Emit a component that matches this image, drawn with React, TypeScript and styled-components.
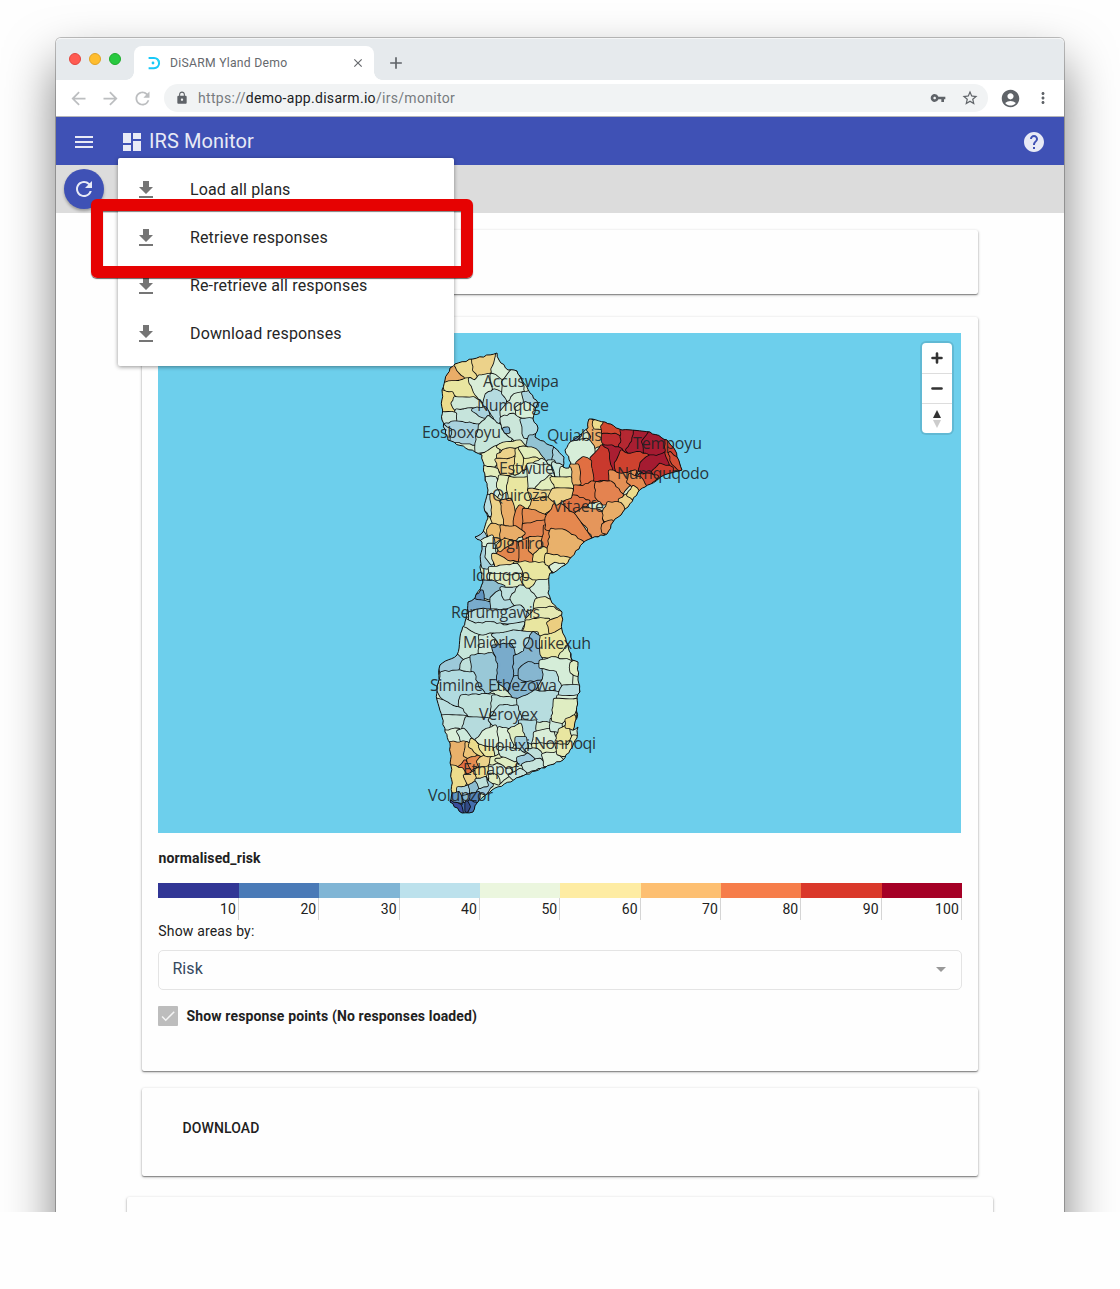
import React from 'react';
import styled, { createGlobalStyle } from 'styled-components';
import {
  MdAccountCircle, MdAdd, MdArrowBack, MdArrowForward, MdCheck, MdClose, MdDashboard, MdGetApp,
  MdHelp, MdLock, MdMenu, MdMoreVert, MdRefresh, MdStarBorder, MdVpnKey,
} from 'react-icons/md';

const GlobalStyle = createGlobalStyle`
  * { box-sizing: border-box; }
  body { margin: 0; background: #fefefe; font-family: Roboto, sans-serif; color: #212121; }
  svg { display: block; flex: none; }
`;

const Stage = styled.div`
  height: 1212px;
  overflow: hidden;
  padding: 38px 56px 0;
`;
const Window = styled.div`
  height: 1300px;
  border-radius: 5px 5px 0 0;
  background: #fefefe;
  box-shadow: 0 0 0 1px rgba(0, 0, 0, 0.24), 0 25px 50px rgba(0, 0, 0, 0.5);
`;
const TabStrip = styled.div`
  height: 42px;
  background: #e6eaed;
  border-radius: 5px 5px 0 0;
  border-top: 1px solid #f5f6f7;
  display: flex;
  align-items: flex-end;
`;
const Lights = styled.div`
  display: flex;
  gap: 8px;
  padding: 0 13px 15px;
  width: 78px;
`;
const Light = styled.i<{ $fill: string; $edge: string }>`
  width: 12px;
  height: 12px;
  border-radius: 50%;
  background: ${(p) => p.$fill};
  border: 1px solid ${(p) => p.$edge};
`;
const Tab = styled.div`
  position: relative;
  width: 240px;
  height: 34px;
  padding: 0 9px 0 12px;
  display: flex;
  align-items: center;
  background: #fff;
  border-radius: 8px 8px 0 0;
  color: #66696d;
  font-size: 12.2px;
  letter-spacing: 0.26px;
  &::before, &::after {
    content: '';
    position: absolute;
    bottom: 0;
    width: 8px;
    height: 8px;
  }
  &::before { left: -8px; background: radial-gradient(circle at 0 0, transparent 7.5px, #fff 8px); }
  &::after { right: -8px; background: radial-gradient(circle at 100% 0, transparent 7.5px, #fff 8px); }
  svg:last-child { margin-left: auto; }
`;
const TabTitle = styled.span` margin-left: 8px; `;
const NewTab = styled.div`
  color: #5f6368;
  padding: 0 0 7px 12px;
`;
const Toolbar = styled.div`
  height: 37px;
  display: flex;
  align-items: center;
  padding-left: 12px;
  gap: 11px;
  background: #fff;
  border-bottom: 1px solid #b5b5b8;
  color: #bcbec0;
`;
const Omnibox = styled.div`
  width: 824px;
  height: 28px;
  padding: 0 9px 0 11px;
  border-radius: 14px;
  background: #f1f3f4;
  color: #5f6368;
  display: flex;
  align-items: center;
`;
const Url = styled.span`
  flex: 1;
  margin-left: 9px;
  font-size: 14px;
  letter-spacing: 0.3px;
  color: #777b7f;
  b { font-weight: 400; color: #202124; }
`;
const StarSlot = styled.span` margin-left: 15px; `;
const Account = styled.div`
  display: flex;
  align-items: center;
  gap: 13px;
  margin-left: 0.5px;
  color: #5f6368;
`;
const AppBar = styled.header`
  height: 48px;
  background: #3f51b5;
  color: #e8eaf6;
  display: flex;
  align-items: center;
  padding: 2px 18px 0 16px;
`;
const Title = styled.h1`
  flex: 1;
  margin: 0 0 2px 5px;
  font-size: 20px;
  line-height: 24px;
  font-weight: 400;
  letter-spacing: 0.08px;
`;
const TitleIcon = styled.span` margin-left: 24px; `;
const ActionBar = styled.div`
  position: relative;
  height: 48px;
  background: #dcdcdc;
  padding: 4px 8px;
`;
const RefreshButton = styled.div`
  width: 40px;
  height: 40px;
  border-radius: 50%;
  background: #3f51b5;
  color: #e8eaf6;
  display: grid;
  place-items: center;
  box-shadow: 0 2px 3px rgba(0, 0, 0, 0.3);
`;
const Menu = styled.ul`
  position: absolute;
  z-index: 2;
  left: 62px;
  top: -7px;
  width: 336px;
  height: 208px;
  margin: 0;
  padding: 8px 0;
  list-style: none;
  background: #fff;
  border-radius: 2px;
  box-shadow: 0 1px 4px rgba(0, 0, 0, 0.42);
`;
const MenuItem = styled.li`
  height: 48px;
  padding: 0 16px;
  display: flex;
  align-items: center;
  gap: 32px;
  font-size: 16px;
  letter-spacing: 0.14px;
  color: #262626;
  svg { color: #757575; }
`;
const MenuText = styled.span` padding-bottom: 1px; `;
const Highlight = styled.div`
  position: absolute;
  z-index: 3;
  left: 35px;
  top: 34px;
  width: 382px;
  height: 79px;
  border: 12px solid #e60202;
  border-radius: 6px;
  box-shadow: 0 1px 1px rgba(0, 0, 0, 0.6), inset 0 1px 1px rgba(0, 0, 0, 0.5);
`;
const Content = styled.main`
  display: flex;
  flex-direction: column;
  padding: 17px 71px 0;
`;
const Card = styled.section<{ $height: number; $gap: number; $wide?: boolean }>`
  height: ${(p) => p.$height}px;
  margin: 0 ${(p) => (p.$wide ? 0 : 15)}px ${(p) => p.$gap}px;
  padding: 16px;
  border-radius: 2px;
  background: #fefefe;
  box-shadow: 0 1px 1px rgba(0, 0, 0, 0.32), 0 1px 3px rgba(0, 0, 0, 0.32);
`;
const MapFrame = styled.div`
  position: relative;
  width: 803px;
  height: 500px;
  background: #6dcfec;
`;
const ZoomControls = styled.div`
  position: absolute;
  right: 9px;
  top: 10px;
  width: 30px;
  height: 90px;
  border-radius: 4px;
  background: #fff;
  box-shadow: 0 0 0 2px rgba(0, 0, 0, 0.1);
`;
const ZoomButton = styled.div`
  height: 30px;
  display: grid;
  place-items: center;
  & + & { border-top: 1px solid #ddd; }
`;
const LegendTitle = styled.div`
  margin-top: 17px;
  padding-left: 0.5px;
  height: 33px;
  font-size: 14px;
  line-height: 17px;
  font-weight: 700;
  letter-spacing: 0.13px;
`;
const Legend = styled.div`
  display: grid;
  grid-template-columns: 81px repeat(9, 1fr);
`;
const LegendStep = styled.div<{ $color: string }>`
  height: 37px;
  border-top: 15px solid ${(p) => p.$color};
  font-size: 14px;
  line-height: 22px;
  letter-spacing: 0.1px;
  text-align: right;
  padding-right: 3px;
  box-shadow: inset -1px 0 #d5d5d5;
`;
const FieldLabel = styled.div`
  height: 30px;
  line-height: 22px;
  padding-left: 0.3px;
  font-size: 14px;
  letter-spacing: 0.17px;
`;
const Select = styled.div`
  height: 40px;
  padding: 0 15px 3px 13.4px;
  border: 1px solid #e4e4e4;
  border-radius: 5px;
  display: flex;
  align-items: center;
  justify-content: space-between;
  font-size: 16px;
  letter-spacing: 0.1px;
  color: #35495e;
`;
const Caret = styled.i`
  margin-top: 1px;
  border: 5px solid transparent;
  border-top-color: #999;
  border-bottom: 0;
`;
const CheckRow = styled.div`
  margin-top: 16px;
  display: flex;
  align-items: center;
  gap: 8.5px;
  font-size: 14px;
  font-weight: 700;
  letter-spacing: 0.14px;
`;
const CheckBox = styled.span`
  width: 20px;
  height: 20px;
  display: grid;
  place-items: center;
  background: #bdbdbd;
  border-radius: 1px;
  color: #f5f5f5;
`;
const DownloadButton = styled.div`
  padding: 14px 24.5px;
  font-size: 14px;
  line-height: 20px;
  font-weight: 500;
  letter-spacing: 0.1px;
`;

type Area = [fill: string, points: string];

/* Country outline in map pixels. */
const outline =
  '455,364 473,359 497,353 499,360 508,370 517,371 522,380 530,393 538,403 535,412 533,419 538,428 535,437 555,448 564,457 563,467 569,468 571,463 565,450 570,442 580,435 588,428 589,419 605,422 622,430 650,432 667,440 675,450 682,470 667,474 645,487 638,492 628,507 613,522 607,534 592,538 583,543 565,565 553,573 550,573 548,593 552,603 562,612 562,630 568,645 572,660 578,662 578,680 580,692 577,697 577,718 573,730 578,727 577,738 570,750 563,760 520,777 492,790 477,803 473,812 462,813 450,802 452,793 450,743 445,732 442,717 437,700 437,690 440,665 457,655 462,630 465,622 468,602 475,598 483,582 480,567 482,542 475,537 483,532 488,518 484,507 488,490 485,477 482,455 475,452 448,440 442,420 442,390 445,380 450,368';

/* Districts, traced at three times map scale from each sheet's origin. */
const sheets: { x: number; y: number; areas: Area[] }[] = [
  {
    x: 420, y: 340,
    areas: [
      ['#e9ad68', '105,72 120,95 145,120 75,132 70,130 90,90'],
      ['#ecdc93', '105,72 160,57 165,90 178,110 165,125 140,115 120,95'],
      ['#ecd28a', '160,57 232,40 222,80 210,100 178,110 163,90'],
      ['#d9eed8', '232,40 245,65 265,85 285,90 280,125 250,125 215,105 222,80'],
      ['#e9e6a0', '75,132 150,118 160,150 175,180 105,175 95,160 78,150'],
      ['#ecdc8c', '68,155 95,160 105,175 100,190 112,215 65,220'],
      ['#d9eed8', '165,125 178,110 215,105 222,150 200,165 185,185 165,155 150,118'],
      ['#d3ebd8', '215,105 250,125 250,165 222,152'],
      ['#cfe8d8', '105,175 160,175 195,200 205,215 165,210 110,210 98,190'],
      ['#b5dbe0', '200,165 222,152 250,165 258,200 235,245 200,215 193,195'],
      ['#c6e4dc', '110,212 165,210 205,220 215,235 180,255 105,245'],
      ['#a9d2dd', '160,210 195,205 205,230 180,225'],
      ['#cce7da', '65,220 105,222 105,250 70,258'],
      ['#a9d2dd', '70,258 105,248 180,257 170,310 85,300'],
      ['#b5dbe0', '70,258 90,270 85,300 65,270'],
      ['#c6e6da', '180,257 205,232 245,265 275,290 260,310 215,335 170,335 170,310'],
      ['#cfeadb', '250,125 280,90 300,120 310,160 285,165 265,180 250,160'],
      ['#d3ebd8', '285,165 310,160 315,200 285,230 250,235 245,215 258,200'],
      ['#a9d2dd', '310,160 330,155 352,190 340,205 315,190'],
      ['#d8efd8', '290,205 315,190 340,205 352,215 340,238 295,238'],
      ['#cbe6da', '245,235 280,225 305,240 315,290 320,320 290,305 250,265'],
      ['#b1dbe0', '305,240 340,240 352,265 345,290 315,290'],
      ['#7eb2d0', '253,267 263,266 265,275 257,275'],
      ['#92c3d3', '330,290 350,285 405,325 415,345 400,365 370,360 320,325'],
      ['#a5d0dc', '405,325 432,350 428,385 415,410 400,365'],
      ['#c6e6da', '385,365 400,365 415,410 400,405'],
      ['#e2edbc', '185,345 235,320 230,360 205,410 190,380'],
      ['#e5e7ac', '235,320 260,310 300,305 320,325 290,330 250,330'],
      ['#ecd28a', '235,345 260,330 290,330 290,350 260,362 235,360'],
      ['#ecd28a', '230,360 260,362 290,350 285,400 245,400'],
      ['#e9e6a0', '290,330 300,325 315,350 312,385 285,400 290,350'],
      ['#e9e6a0', '315,350 345,345 365,360 340,375 312,385'],
      ['#e2edbc', '320,325 345,330 370,360 345,345 315,350 300,325'],
      ['#d9eed8', '340,375 365,360 385,380 395,410 340,400'],
      ['#d9eed8', '425,385 450,385 450,415 425,415'],
    ],
  },
  {
    x: 420, y: 470,
    areas: [
      ['#e2edbc', '190,-10 230,0 240,20 205,25'],
      ['#cde9dc', '200,25 225,25 240,55 228,80 205,70'],
      ['#e2edbc', '240,20 270,25 265,60 245,70 235,50'],
      ['#e9e6a0', '270,25 325,25 328,60 340,90 330,115 305,115 275,125 270,85 265,60'],
      ['#d9eed8', '325,-15 390,-10 400,30 360,45 328,60'],
      ['#e2edbc', '390,20 430,50 385,65 350,55 360,45'],
      ['#e9e6a0', '425,20 450,20 453,55 430,50'],
      ['#c9e7db', '400,-20 425,-10 430,50 410,20'],
      ['#ecd28a', '328,60 385,65 455,60 445,75 400,85 340,90'],
      ['#ebbe70', '340,90 400,85 395,110 370,130 330,115'],
      ['#b9dde0', '195,80 215,80 217,110 210,135 193,110'],
      ['#ecd28a', '215,75 245,95 250,130 260,170 215,165 220,110'],
      ['#e9ad68', '245,95 270,90 280,125 290,155 285,172 260,170 250,130'],
      ['#e48b50', '290,130 300,110 312,120 312,200 295,180 285,165'],
      ['#e48b50', '312,120 345,125 385,140 375,160 312,165'],
      ['#e38450', '312,165 375,155 385,175 370,200 365,240 330,240 312,200'],
      ['#e5edb8', '188,145 205,145 217,180 200,195 190,170'],
      ['#ebbe70', '215,165 245,170 245,205 215,215 205,180'],
      ['#e9ad68', '245,170 285,172 310,190 270,215 245,205'],
      ['#9fccdc', '167,195 185,185 195,200 190,215 170,210'],
      ['#d9eed8', '185,215 215,200 220,225 200,240'],
      ['#a5d0dc', '178,230 205,240 205,275 220,290 190,290 178,255'],
      ['#cde9dc', '205,225 220,225 225,255 215,280 200,260'],
      ['#e3864d', '240,240 275,215 300,220 300,275 260,275 235,260'],
      ['#ebbe70', '235,225 255,210 275,215 240,240'],
      ['#e48b50', '300,220 330,205 330,240 345,265 335,285 300,275'],
      ['#e9ad68', '330,205 365,205 365,240 345,255 330,240'],
      ['#e3864d', '375,170 395,170 400,205 390,235 370,225'],
      ['#ecd28a', '220,255 240,262 260,275 290,280 230,295'],
      ['#ecdc8c', '345,255 365,235 380,240 380,275 345,280'],
      ['#ecdc93', '385,255 445,270 430,290 390,280'],
      ['#e9b16b', '395,175 455,185 490,215 450,265 390,250'],
      ['#e9e6a0', '285,280 345,280 390,285 390,330 345,335 330,325 300,310'],
      ['#d9eed8', '210,295 250,290 290,285 305,315 265,320 215,315'],
      ['#deedc4', '215,315 265,320 300,315 320,340 290,355 250,350 215,335'],
      ['#e9e6a0', '305,325 345,335 352,355 325,360'],
      ['#cfeadb', '352,335 390,330 385,385 350,390 330,365'],
      ['#8dbdd0', '190,335 215,335 250,350 245,360 215,385 185,375'],
      ['#6094bf', '165,385 185,365 188,395 170,395'],
      ['#79abcc', '145,405 150,390 215,400 220,425 190,420 150,435'],
      ['#b1dbe0', '215,385 240,365 275,395 300,430 220,425'],
      ['#bfe0de', '245,355 290,355 280,380 255,385'],
      ['#c6e6da', '275,385 300,350 325,360 350,390 340,415 300,420'],
      ['#e5e9b3', '345,420 350,390 375,385 400,400 425,430 390,430'],
      ['#d9eed8', '390,290 430,280 435,290 405,308'],
    ],
  },
  {
    x: 540, y: 400,
    areas: [
      ['#a51b31', '285,100 380,122 385,200 320,215 260,165'],
      ['#e9ad68', '147,57 163,65 165,82 190,85 192,110 180,135 152,145 158,110 145,90'],
      ['#ecdc8c', '163,65 195,65 190,85 165,82'],
      ['#d7eed9', '75,150 90,125 140,120 158,140 160,160 145,185 92,192 85,170'],
      ['#7599c3', '88,105 105,93 120,105 110,115 95,118'],
      ['#d0482f', '195,65 245,92 242,115 225,110 190,100 187,80'],
      ['#be2e30', '190,105 225,105 245,120 240,150 215,140 190,125'],
      ['#b52832', '245,92 285,92 280,125 262,155 240,145 248,120'],
      ['#a81e32', '285,92 330,97 310,125 315,155 275,160 262,150 280,125'],
      ['#a51b31', '310,125 330,97 380,122 385,160 350,175 315,155'],
      ['#aa1e32', '190,140 215,140 243,150 230,185 228,210 212,215 200,180'],
      ['#c9392d', '155,175 185,140 200,150 205,185 212,215 205,245 155,245 150,205'],
      ['#ce422f', '228,190 245,155 262,165 300,160 325,170 305,190 285,225 235,225'],
      ['#a51b31', '305,190 330,170 350,172 385,155 380,200 330,225 300,210'],
      ['#ce422f', '380,122 405,150 425,210 395,205 380,160'],
      ['#d34e34', '390,160 408,175 425,210 400,190'],
      ['#ca3a2e', '340,215 360,195 395,205 390,222 355,235'],
      ['#d34e34', '300,225 330,225 350,230 320,258 295,235'],
      ['#e49055', '210,215 245,225 285,215 270,250 245,280 215,260'],
      ['#e48b50', '270,225 300,235 315,260 290,270 265,245'],
      ['#e16f42', '112,190 130,175 150,185 155,245 130,262 118,250'],
      ['#e9ad68', '90,197 112,197 118,250 95,262'],
      ['#df7645', '95,262 130,262 155,248 205,248 170,265 175,300 145,305 100,290'],
      ['#e48350', '170,250 212,248 245,285 240,310 190,310 170,290'],
      ['#ecd28a', '240,300 265,285 275,310 250,330'],
      ['#ecdc8c', '265,285 280,262 293,275 280,295'],
      ['#e9ad68', '190,340 205,310 240,312 250,330 215,368 195,360'],
      ['#df7645', '75,300 100,290 145,305 130,325 105,345 80,330'],
      ['#e5965b', '105,345 130,325 180,335 190,400 160,410 140,375'],
      ['#e5884f', '20,355 50,310 80,330 105,350 150,415 130,430 75,395 20,385'],
      ['#e5965b', '190,375 215,365 205,400 190,395'],
      ['#e9b16b', '35,390 75,395 130,430 90,478 25,465'],
      ['#ecdc93', '20,465 90,478 70,500 20,490'],
      ['#d9eed8', '33,500 45,492 70,495 45,515'],
      ['#dfedc2', '65,205 88,205 90,235 65,230'],
      ['#e9e6a0', '35,235 90,235 95,270 55,270'],
      ['#ecd28a', '40,270 95,270 90,290 50,310 30,290'],
    ],
  },
  {
    x: 420, y: 590,
    areas: [
      ['#b9dedf', '150,70 190,60 240,65 300,50 325,80 310,100 250,95 200,100 150,90'],
      ['#bfe1db', '135,90 165,105 210,100 260,110 310,100 300,125 240,135 205,130 155,140 130,115'],
      ['#c6e6da', '128,115 180,140 180,195 145,210 110,195'],
      ['#cde9dc', '180,140 220,135 220,175 235,195 180,193'],
      ['#e5e9b3', '345,60 400,55 430,75 395,100 350,90 320,90'],
      ['#e9e6a0', '312,125 320,95 350,90 385,90 390,150 355,145 350,125'],
      ['#ecce80', '385,100 425,80 425,120 395,135'],
      ['#e9e6a0', '355,145 395,135 425,120 445,165 420,200 360,198'],
      ['#dfedc2', '420,200 442,170 452,215 445,235'],
      ['#b7dddf', '220,135 280,125 350,130 345,180 300,195 270,190'],
      ['#9cc9d9', '62,225 108,195 130,215 120,245 65,250'],
      ['#bfe1db', '130,215 155,205 155,240 120,245'],
      ['#99c8d7', '155,200 215,193 240,225 230,295 190,310 170,285 158,240'],
      ['#79abcb', '220,170 270,165 285,200 285,305 265,300 235,270 238,220'],
      ['#86b6d0', '285,200 315,185 340,130 355,140 355,195 370,215 350,230 320,220 300,240 300,265 285,260'],
      ['#b7dddf', '362,230 410,238 430,285 420,310 360,300'],
      ['#86b6d0', '285,262 330,270 360,268 340,305 290,330 270,305'],
      ['#86b6d0', '300,240 325,220 362,230 362,265 320,270 300,262'],
      ['#d5edd8', '362,215 395,205 450,215 455,290 430,290 412,240 362,230'],
      ['#dfedc2', '455,220 475,210 475,255 455,245'],
      ['#b1dbe0', '65,250 120,245 158,250 170,290 190,310 135,315 115,340 130,375 100,370 55,300'],
      ['#bfe1db', '125,320 220,315 215,390 140,382 120,345'],
      ['#bfe1db', '220,320 290,330 300,390 215,390'],
      ['#b7dddf', '295,330 345,305 420,310 400,390 300,390'],
      ['#b7dddf', '430,290 475,290 475,320 420,315'],
      ['#d9eed8', '415,320 470,320 470,385 430,380 410,355'],
      ['#e9e6a0', '430,370 465,370 460,390 430,390'],
    ],
  },
  {
    x: 420, y: 700,
    areas: [
      ['#b9dedf', '52,0 125,30 140,55 65,50'],
      ['#c6e4dc', '65,50 140,52 130,90 85,95 65,90'],
      ['#b5dbdd', '140,55 210,60 200,90 165,120 130,90'],
      ['#b7dddf', '210,60 240,20 290,20 300,60 280,95 235,85'],
      ['#b1dbe0', '300,65 345,65 340,130 310,120'],
      ['#d9eed8', '75,95 115,90 125,120 145,130 90,128'],
      ['#cde9dc', '115,95 130,90 155,120 150,135 125,120'],
      ['#d9eed8', '170,120 200,90 225,80 240,130 210,145 185,135'],
      ['#d9eed8', '238,85 268,92 285,120 270,145 240,135'],
      ['#dfedc2', '268,92 300,75 310,115 285,130'],
      ['#e9b16b', '90,130 140,130 130,165 145,195 92,200'],
      ['#ecc378', '140,130 150,135 190,165 175,185 135,165'],
      ['#e06e40', '118,203 135,185 152,205 143,222'],
      ['#e58c50', '145,180 175,170 190,185 155,205'],
      ['#ecdc8c', '155,120 180,140 200,165 190,172 150,138'],
      ['#e9e6a0', '180,138 215,145 220,170 200,168'],
      ['#ecdc8c', '95,200 125,208 145,235 130,260 95,285'],
      ['#ecd28a', '135,228 170,215 175,245 150,258'],
      ['#ecd28a', '175,185 190,172 215,175 210,200 185,205'],
      ['#e2edbc', '215,175 240,165 250,190 230,200 210,200'],
      ['#ecdc8c', '170,210 210,200 225,220 200,235 175,235'],
      ['#d9eed8', '210,200 260,195 275,220 240,245 205,230'],
      ['#dfedc2', '230,180 285,170 285,195 260,200'],
      ['#dfedc2', '210,225 230,230 235,250 210,245'],
      ['#9fcddb', '290,115 315,115 320,150 295,150'],
      ['#cde9dc', '240,145 295,150 315,165 285,180 245,165'],
      ['#9fccdc', '295,175 345,160 355,180 325,195 300,190'],
      ['#d9eed8', '345,100 395,90 410,125 380,145 340,130'],
      ['#dfedc2', '340,135 400,135 405,160 350,160'],
      ['#bfe1db', '320,150 350,150 375,175 355,180'],
      ['#c6e4dc', '310,195 360,180 375,195 315,215'],
      ['#d9eed8', '370,165 410,160 425,180 375,195'],
      ['#cde9dc', '395,60 420,55 425,90 395,90'],
      ['#dfedc2', '405,0 470,0 460,40 425,65 400,60'],
      ['#e9e6a0', '420,90 440,80 450,110 440,140 410,125'],
      ['#ecdc8c', '440,60 462,50 458,85 440,80'],
      ['#e5e9b3', '410,135 445,140 460,110 475,115 440,165 415,160'],
      ['#c6e4dc', '270,225 300,210 315,220 280,235'],
      ['#a9d2dd', '115,265 145,260 155,285 120,295'],
      ['#86b6d0', '120,295 150,285 165,300 135,312'],
      ['#8dbdd0', '150,258 175,240 195,260 175,280 155,285'],
      ['#9fccdc', '195,240 215,255 195,280 175,275'],
      ['#bfe1db', '170,240 195,235 200,255 180,260'],
      ['#5384b8', '155,285 175,280 170,312 150,305'],
      ['#6094bf', '90,285 115,280 125,305 95,305'],
      ['#456fae', '120,318 150,305 170,312 155,335 125,340'],
      ['#394d9b', '90,305 120,318 125,340 105,325'],
      ['#334b86', '140,308 146,320 140,332'],
    ],
  },
];

/* Breaks long edges into short uneven ones, as surveyed borders have. */
const roughen = (points: string, size: number) => {
  const pts = points.split(' ').map((p) => p.split(',').map(Number));
  return pts
    .flatMap((a, i) => {
      const b = pts[(i + 1) % pts.length];
      const dx = b[0] - a[0];
      const dy = b[1] - a[1];
      const length = Math.hypot(dx, dy);
      const steps = Math.max(1, Math.round(length / (size * 3.4)));
      const flip = a[0] > b[0] || (a[0] === b[0] && a[1] > b[1]) ? -1 : 1;
      return Array.from({ length: steps }, (_, k) => {
        if (k === 0) return `${a[0]},${a[1]}`;
        const x = a[0] + (dx * k) / steps;
        const y = a[1] + (dy * k) / steps;
        const bend = Math.sin(x * 1.7 + y * 2.3) * size * 0.7 * flip;
        return `${(x - (dy / length) * bend).toFixed(1)},${(y + (dx / length) * bend).toFixed(1)}`;
      });
    })
    .join(' ');
};

const places: [name: string, left: number, right: number, baseline: number][] = [
  ['Accuswipa', 483, 559, 387], ['Numquge', 477, 549, 411], ['Eosboxoyu', 422, 501, 438],
  ['Quiabis', 547, 602, 441], ['Tempoyu', 633, 702, 449], ['Numquqodo', 617, 709, 479],
  ['Estwule', 499, 554, 474], ['Quiroza', 492, 548, 501], ['Vitaefe', 553, 604, 512],
  ['Digniro', 491, 544, 549], ['Idcuqop', 472, 530, 581], ['Rerumgawis', 451, 540, 618],
  ['Maiorle', 463, 517, 648], ['Quikexuh', 522, 591, 649], ['Similne', 430, 483, 691],
  ['Etbezowa', 488, 557, 691], ['Veroyex', 479, 538, 720], ['Illoluxi', 483, 530, 751],
  ['Nonnoqi', 534, 596, 749], ['Ethapof', 463, 519, 775], ['Volupzor', 428, 493, 801],
];

const PlaceName = styled.text`
  font: 16px 'Open Sans', sans-serif;
  fill: #1c2224;
  fill-opacity: 0.9;
`;

/* Each district is widened a little and laid over the last, so neighbours share one border line. */
const District = ({ fill, points }: { fill: string; points: string }) => {
  const shape = roughen(points, 3);
  return (
    <>
      <polygon points={shape} fill="none" stroke="#0c0c0c" strokeWidth="13" />
      <polygon points={shape} fill={fill} stroke={fill} strokeWidth="8" />
    </>
  );
};

const RiskMap = () => (
  <svg width="803" height="500" viewBox="158 333 803 500">
    <clipPath id="country"><polygon points={roughen(outline, 1)} /></clipPath>
    <polygon points={roughen(outline, 1)} fill="#d3e9cf" />
    <g clipPath="url(#country)" strokeLinejoin="round">
      {sheets.map((s) => (
        <g key={`${s.x}-${s.y}`} transform={`translate(${s.x} ${s.y}) scale(0.33333)`}>
          {s.areas.map(([fill, points]) => <District key={points} fill={fill} points={points} />)}
        </g>
      ))}
    </g>
    <polygon points={roughen(outline, 1)} fill="none" stroke="#101010" strokeWidth="1" />
    {places.map(([name, left, right, y]) => (
      <PlaceName key={name} x={left} y={y} textLength={right - left}>{name}</PlaceName>
    ))}
  </svg>
);

const legend: [string, number][] = [
  ['#313695', 10], ['#4a7ab7', 20], ['#80b5d5', 30], ['#bce1ec', 40], ['#ebf6de', 50],
  ['#feeca3', 60], ['#fdbf71', 70], ['#f67d4a', 80], ['#da382a', 90], ['#a50026', 100],
];

const menuItems = ['Load all plans', 'Retrieve responses', 'Re-retrieve all responses', 'Download responses'];

export default function App() {
  return (
    <>
      <GlobalStyle />
      <Stage>
        <Window>
          <TabStrip>
            <Lights>
              <Light $fill="#ff5b52" $edge="#e2463f" />
              <Light $fill="#ffbd2e" $edge="#e1a325" />
              <Light $fill="#28c940" $edge="#1eac2c" />
            </Lights>
            <Tab>
              <svg width="16" height="16" viewBox="0 0 16 16" fill="none" stroke="#18c8f8" strokeWidth="2">
                <path d="M2.6 3H8a5 5 0 0 1 0 10.2H2.6" />
                <path d="M10.8 3.8A5.2 5.2 0 0 1 13 8" stroke="#25d3f5" />
                <circle cx="7" cy="8" r="1.4" fill="#18c8f8" stroke="none" />
              </svg>
              <TabTitle>DiSARM Yland Demo</TabTitle>
              <MdClose size={14} />
            </Tab>
            <NewTab><MdAdd size={20} /></NewTab>
          </TabStrip>
          <Toolbar>
            <MdArrowBack size={21} />
            <MdArrowForward size={21} />
            <MdRefresh size={21} />
            <Omnibox>
              <MdLock size={14} />
              <Url>https://<b>demo-app.disarm.io</b>/irs/monitor</Url>
              <MdVpnKey size={16} />
              <StarSlot><MdStarBorder size={18} /></StarSlot>
            </Omnibox>
            <Account>
              <MdAccountCircle size={21} />
              <MdMoreVert size={18} />
            </Account>
          </Toolbar>
          <AppBar>
            <MdMenu size={24} />
            <TitleIcon><MdDashboard size={24} /></TitleIcon>
            <Title>IRS Monitor</Title>
            <MdHelp size={24} />
          </AppBar>
          <ActionBar>
            <RefreshButton><MdRefresh size={24} /></RefreshButton>
            <Menu>
              {menuItems.map((item) => (
                <MenuItem key={item}><MdGetApp size={24} /><MenuText>{item}</MenuText></MenuItem>
              ))}
            </Menu>
            <Highlight />
          </ActionBar>
          <Content>
            <Card $height={64} $gap={23} />
            <Card $height={754} $gap={17}>
              <MapFrame>
                <RiskMap />
                <ZoomControls>
                  <ZoomButton>
                    <svg width="12" height="12" viewBox="0 0 12 12" stroke="#333" strokeWidth="2.6" strokeLinecap="round"><path d="M1.5 6h9M6 1.5v9" /></svg>
                  </ZoomButton>
                  <ZoomButton>
                    <svg width="12" height="12" viewBox="0 0 12 12" stroke="#333" strokeWidth="2.6" strokeLinecap="round"><path d="M1.5 5.5h9" /></svg>
                  </ZoomButton>
                  <ZoomButton>
                    <svg width="10" height="18" viewBox="0 0 10 18"><path d="M5 0l4 8H1z" fill="#333" /><path d="M5 18l4-8H1z" fill="#ccc" /></svg>
                  </ZoomButton>
                </ZoomControls>
              </MapFrame>
              <LegendTitle>normalised_risk</LegendTitle>
              <Legend>
                {legend.map(([color, value]) => <LegendStep key={value} $color={color}>{value}</LegendStep>)}
              </Legend>
              <FieldLabel>Show areas by:</FieldLabel>
              <Select>Risk<Caret /></Select>
              <CheckRow>
                <CheckBox><MdCheck size={18} /></CheckBox>
                Show response points (No responses loaded)
              </CheckRow>
            </Card>
            <Card $height={88} $gap={21}>
              <DownloadButton>DOWNLOAD</DownloadButton>
            </Card>
            <Card $height={140} $gap={0} $wide />
          </Content>
        </Window>
      </Stage>
    </>
  );
}
